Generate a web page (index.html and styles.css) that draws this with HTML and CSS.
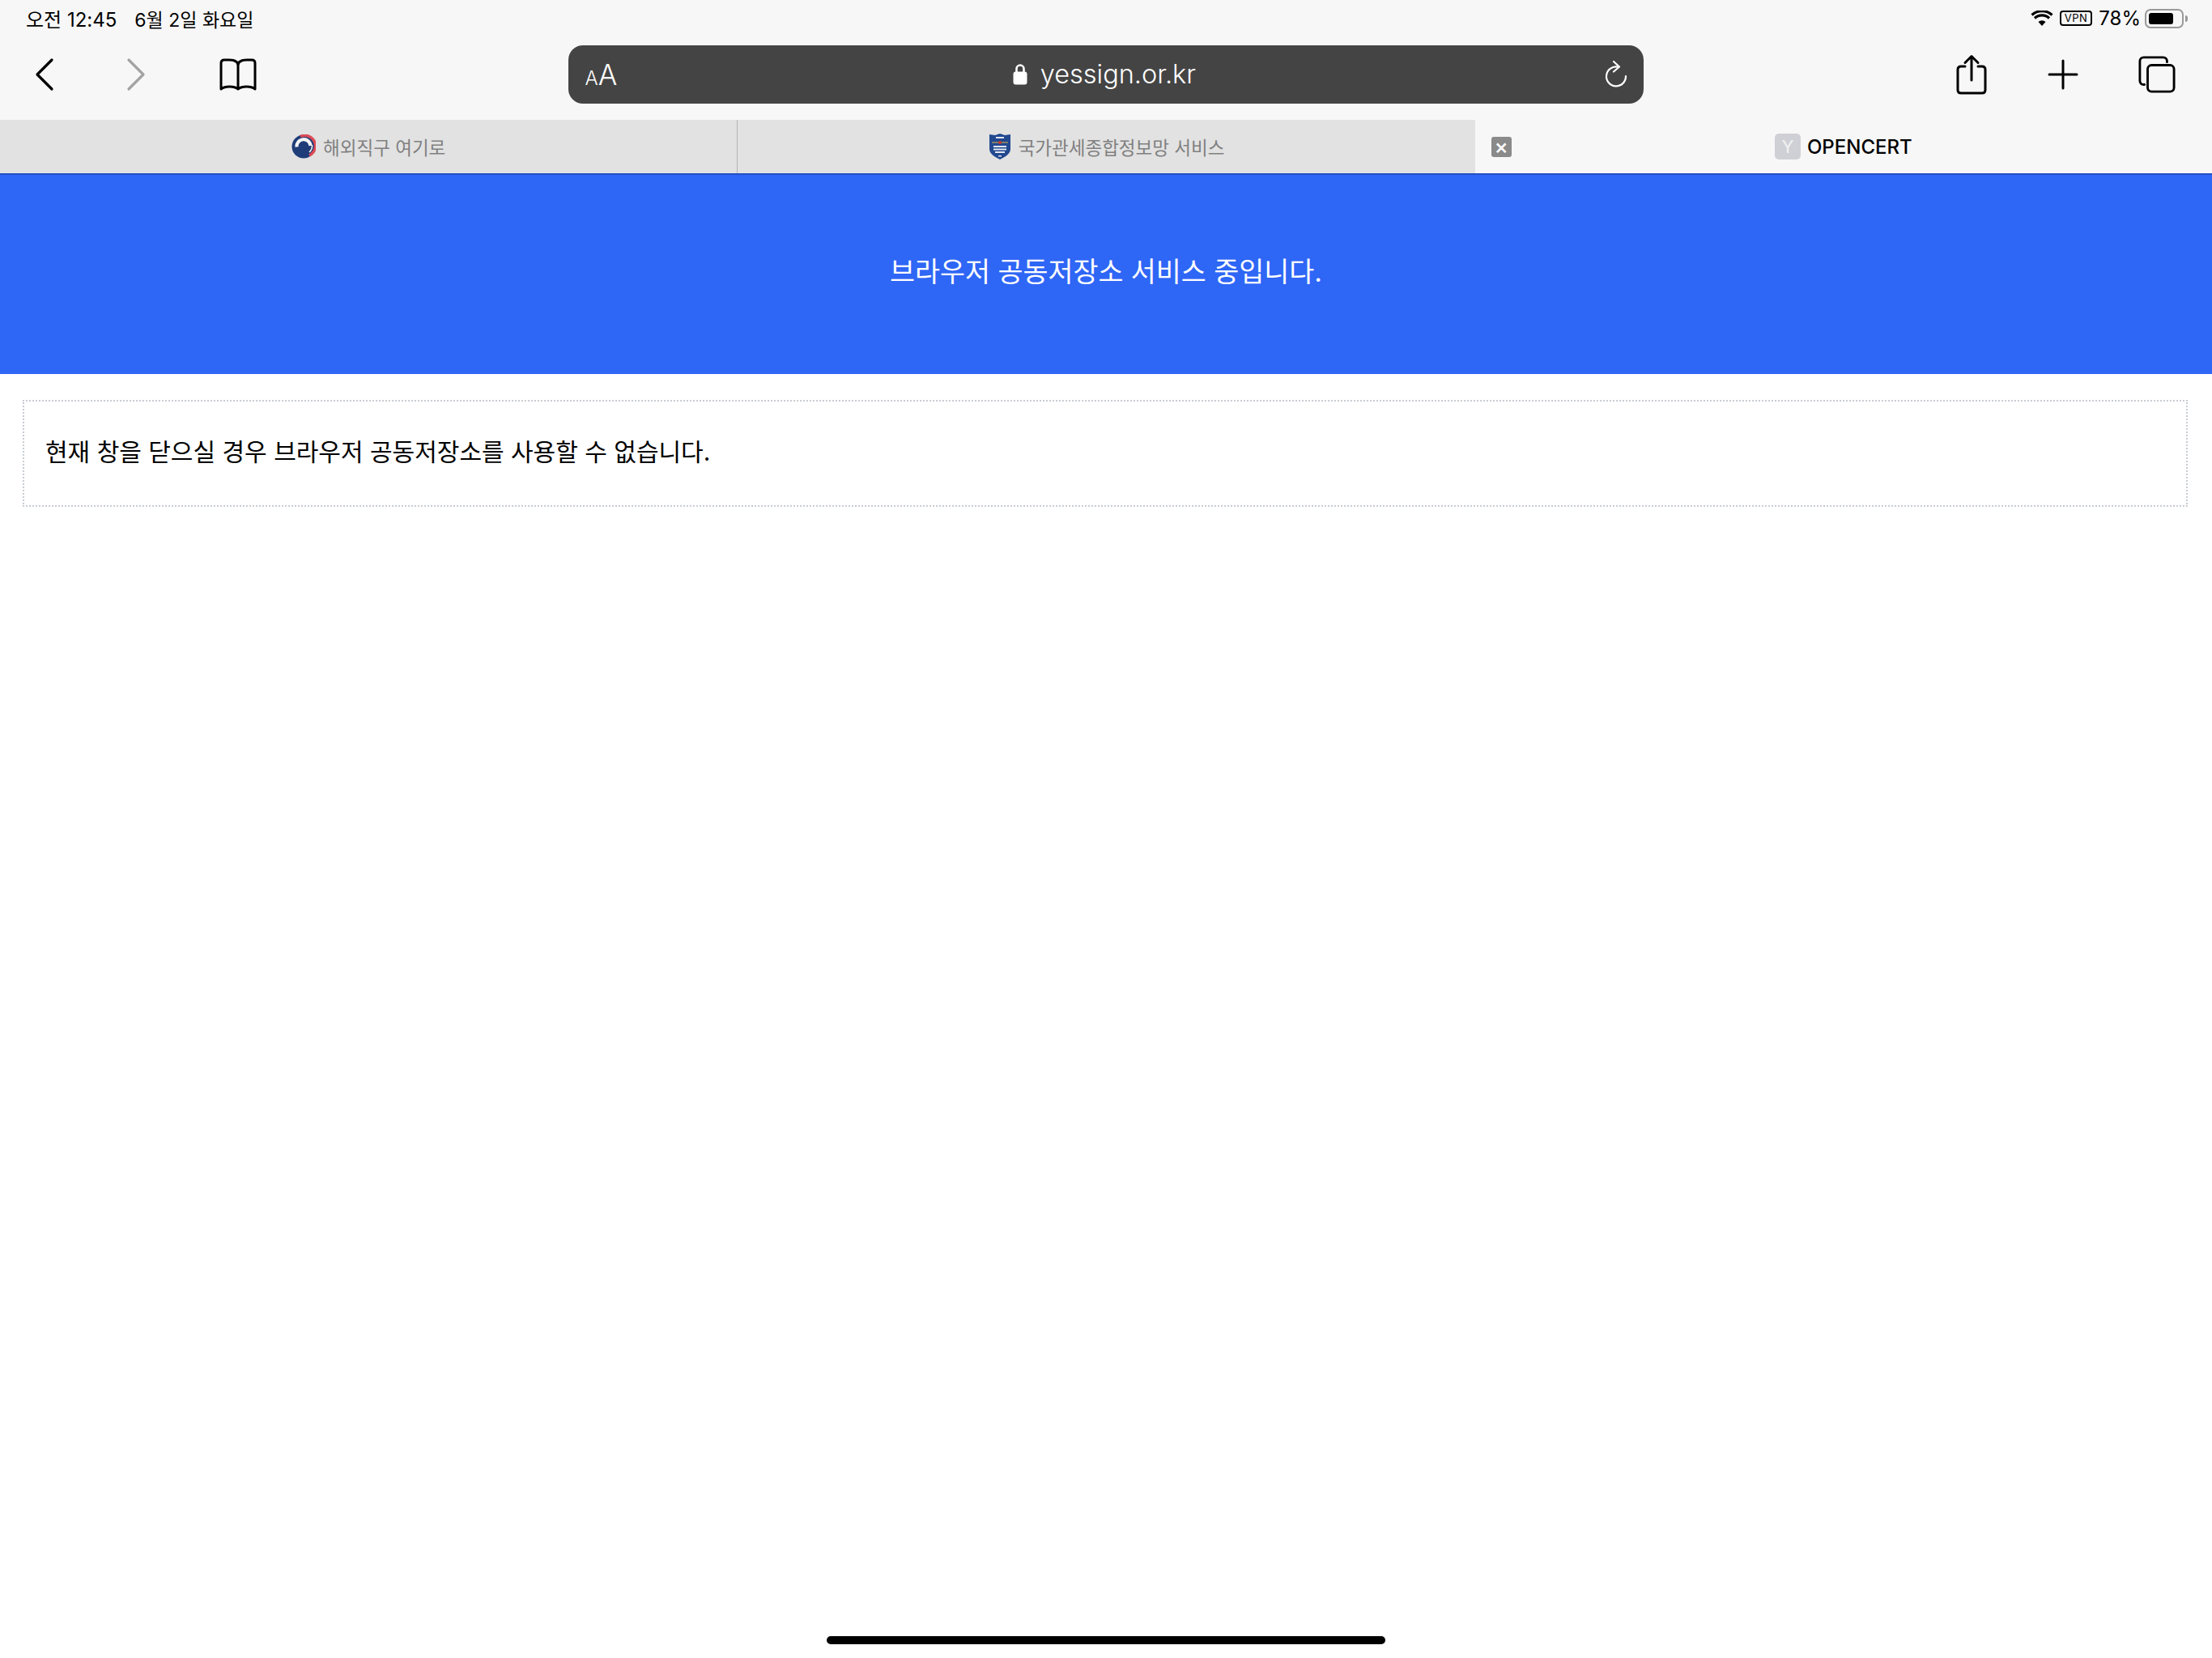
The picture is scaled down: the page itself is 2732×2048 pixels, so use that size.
FILE: index.html
```html
<!DOCTYPE html>
<html lang="ko">
<head>
  <meta charset="utf-8" />
  <title>yessign.or.kr</title>
  <link rel="stylesheet" href="styles.css">
</head>
<body>

  <div class="chrome">
    <div class="status">
      <div class="status-left"><span>오전 12:45</span><span class="status-date">6월 2일 화요일</span></div>
      <div class="status-right">
        <svg class="wifi" width="28" height="20" viewBox="0 0 28 20">
          <path d="M14 19l-4.5-5a6.5 6.5 0 0 1 9 0z" fill="#000"/>
          <path d="M5 9.5a13 13 0 0 1 18 0M1.5 5.5a18.5 18.5 0 0 1 25 0" fill="none" stroke="#000" stroke-width="3.2"/>
        </svg>
        <span class="vpn">VPN</span>
        <span>78%</span>
        <div class="battery"><div class="battery-fill"></div></div>
        <div class="battery-tip"></div>
      </div>
    </div>

    <div class="toolbar">
      <div class="tools tools-left">
        <svg width="30" height="42" viewBox="0 0 30 42"><path d="M24 3L6 21l18 18" fill="none" stroke="#000" stroke-width="3.2" stroke-linecap="round" stroke-linejoin="round"/></svg>
        <svg width="30" height="42" viewBox="0 0 30 42"><path d="M6 3l18 18L6 39" fill="none" stroke="#a3a3a3" stroke-width="3.2" stroke-linecap="round" stroke-linejoin="round"/></svg>
        <svg class="book" width="48" height="40" viewBox="0 0 48 40"><path d="M24 9C24 4 19 2 13 2H7C4 2 3 4 3 6v32c5-4 16-4 21 0 5-4 16-4 21 0V6c0-2-1-4-4-4h-6c-6 0-11 2-11 7zm0 0v29" fill="none" stroke="#000" stroke-width="3" stroke-linejoin="round"/></svg>
      </div>

      <div class="urlbar">
        <span class="aa"><small>A</small>A</span>
        <span class="site">
          <svg width="18" height="27" viewBox="0 0 18 27"><path d="M4.5 12V7a4.5 4.5 0 0 1 9 0v5" fill="none" stroke="#fff" stroke-width="2.6"/><rect x="0.5" y="10.5" width="17" height="16" rx="3" fill="#fff"/></svg>
          yessign.or.kr
        </span>
        <svg class="reload" width="30" height="38" viewBox="0 0 30 38"><path d="M17 7.5A12 12 0 1 0 27 19" fill="none" stroke="#fff" stroke-width="2.2" stroke-linecap="round"/><path d="M12 1l7 6.5-7 6" fill="none" stroke="#fff" stroke-width="2.2" stroke-linecap="round" stroke-linejoin="round"/></svg>
      </div>

      <div class="tools tools-right">
        <svg width="40" height="50" viewBox="0 0 40 50"><path d="M12 15H7c-2.5 0-4 1.5-4 4v25c0 2.5 1.5 4 4 4h26c2.5 0 4-1.5 4-4V19c0-2.5-1.5-4-4-4h-5" fill="none" stroke="#000" stroke-width="3" stroke-linecap="round"/><path d="M20 32V3M12 10.5L20 2.5l8 8" fill="none" stroke="#000" stroke-width="3" stroke-linecap="round" stroke-linejoin="round"/></svg>
        <svg width="38" height="38" viewBox="0 0 38 38"><path d="M19 2v34M2 19h34" fill="none" stroke="#000" stroke-width="3" stroke-linecap="round"/></svg>
        <svg width="46" height="46" viewBox="0 0 48 48"><path d="M8 37H7c-3 0-5-2-5-5V7c0-3 2-5 5-5h25c3 0 5 2 5 5v1" fill="none" stroke="#000" stroke-width="3" stroke-linecap="round"/><rect x="12" y="12" width="34" height="34" rx="5" fill="none" stroke="#000" stroke-width="3"/></svg>
      </div>
    </div>

    <div class="tabs">
      <div class="tab">
        <svg width="30" height="30" viewBox="0 0 30 30">
          <circle cx="15" cy="15" r="14.5" fill="#1f3d78"/>
          <path d="M11 2.5A12.8 12.8 0 0 1 22 26" fill="none" stroke="#dc4a55" stroke-width="3.4"/>
          <path d="M6.5 15.5a8.5 8.5 0 0 1 17-1.5" fill="none" stroke="#f4f4f4" stroke-width="4.2"/>
          <path d="M25.5 13a11 11 0 0 1-3.5 9" fill="none" stroke="#f4f4f4" stroke-width="1.5"/>
        </svg>
        <span>해외직구 여기로</span>
      </div>
      <div class="tab">
        <svg width="28" height="32" viewBox="0 0 28 32">
          <path d="M14 0l6 2 7-1v18c0 6-7 10-13 13C8 29 1 25 1 19V1l7 1z" fill="#22488f"/>
          <rect x="9" y="4" width="10" height="2" fill="#dfe6f2"/>
          <path d="M4 11h20" stroke="#d6b24a" stroke-width="1"/>
          <circle cx="14" cy="11" r="2" fill="#c8372f"/>
          <rect x="6" y="15" width="16" height="2" fill="#dfe6f2"/>
          <rect x="6" y="18.5" width="16" height="2" fill="#dfe6f2"/>
          <rect x="8" y="22" width="12" height="2" fill="#dfe6f2"/>
          <rect x="12" y="27" width="4" height="1.5" fill="#dfe6f2"/>
        </svg>
        <span>국가관세종합정보망 서비스</span>
      </div>
      <div class="tab tab-active">
        <span class="tab-close">×</span>
        <span class="tab-title"><span class="favicon">Y</span>OPENCERT</span>
      </div>
    </div>
  </div>

  <div class="banner">브라우저 공동저장소 서비스 중입니다.</div>

  <div class="notice">현재 창을 닫으실 경우 브라우저 공동저장소를 사용할 수 없습니다.</div>

  <div class="home-bar"></div>

</body>
</html>
```

FILE: styles.css
```css
body {
  margin: 0;
  display: flex;
  flex-direction: column;
  height: 2048px;
  background: #fff;
  color: #000;
  font-family: Inter, "Noto Sans CJK KR", sans-serif;
  overflow: hidden;
}

svg {
  display: block;
}

.chrome {
  background: #f7f7f7;
}

.status {
  display: flex;
  justify-content: space-between;
  align-items: center;
  height: 45px;
  padding: 0 30px 0 32px;
  font-size: 24px;
}

.status-left {
  display: flex;
  align-items: center;
  gap: 22px;
}

.status-date {
  font-size: 23px;
}

.status-right {
  display: flex;
  align-items: center;
  gap: 8px;
}

.vpn {
  border: 2px solid #000;
  border-radius: 4px;
  font-size: 13px;
  line-height: 15px;
  padding: 0 4px;
  letter-spacing: 0.5px;
}

.battery {
  box-sizing: border-box;
  width: 48px;
  height: 24px;
  margin-left: -3px;
  padding: 3px;
  border: 2px solid #999;
  border-radius: 7px;
}

.battery-fill {
  width: 78%;
  height: 100%;
  background: #000;
  border-radius: 3px;
}

.battery-tip {
  width: 3px;
  height: 8px;
  margin-left: -6px;
  background: #999;
  border-radius: 0 3px 3px 0;
}

.toolbar {
  display: flex;
  align-items: center;
  justify-content: space-between;
  box-sizing: border-box;
  height: 103px;
  padding: 0 45px 10px 40px;
}

.tools {
  display: flex;
  align-items: center;
}

.tools-left {
  width: 422px;
  gap: 83px;
}

.tools-left .book {
  margin-left: 4px;
}

.tools-right {
  width: 418px;
  justify-content: flex-end;
  gap: 74px;
}

.urlbar {
  display: flex;
  align-items: center;
  justify-content: space-between;
  box-sizing: border-box;
  width: 1328px;
  height: 72px;
  padding: 0 18px 0 21px;
  background: #444;
  border-radius: 18px;
  color: #fff;
}

.aa {
  font-size: 35px;
  font-weight: 300;
}

.aa small {
  font-size: 24px;
}

.site {
  display: flex;
  align-items: center;
  gap: 16px;
  margin-right: 16px;
  font-size: 32.5px;
  font-weight: 300;
}

.reload {
  margin-top: 4px;
}

.tabs {
  display: flex;
  height: 66px;
}

.tab {
  display: flex;
  flex: 1;
  align-items: center;
  justify-content: center;
  gap: 9px;
  background: #e2e2e2;
  color: #808080;
  font-size: 22.5px;
}

.tab:first-child {
  border-right: 1px solid #b5b5b5;
}

.tab-active {
  position: relative;
  background: #f7f7f7;
  color: #000;
  font-size: 24px;
  font-weight: 500;
}

.tab-close {
  position: absolute;
  left: 20px;
  top: 21px;
  width: 25px;
  height: 25px;
  border-radius: 3px;
  background: #8a8a8a;
  color: #fff;
  font-size: 26px;
  line-height: 24px;
  text-align: center;
}

.tab-title {
  display: flex;
  align-items: center;
  gap: 8px;
}

.favicon {
  width: 32px;
  height: 32px;
  border-radius: 5px;
  background: #cfd0d6;
  color: #f2f2f2;
  font-size: 22px;
  font-weight: 400;
  line-height: 32px;
  text-align: center;
}

.banner {
  display: flex;
  align-items: center;
  justify-content: center;
  box-sizing: border-box;
  height: 248px;
  padding-bottom: 12px;
  background: #2e66f6;
  border-top: 2px solid #2450c4;
  color: #fff;
  font-size: 33.7px;
}

.notice {
  box-sizing: border-box;
  height: 132px;
  margin: 32px 30px 0 28px;
  padding: 37px 26px;
  border: 2px dotted #c8ccd2;
  font-size: 30px;
  line-height: 50px;
}

.home-bar {
  width: 690px;
  height: 10px;
  margin: auto auto 17px;
  background: #000;
  border-radius: 5px;
}
```
